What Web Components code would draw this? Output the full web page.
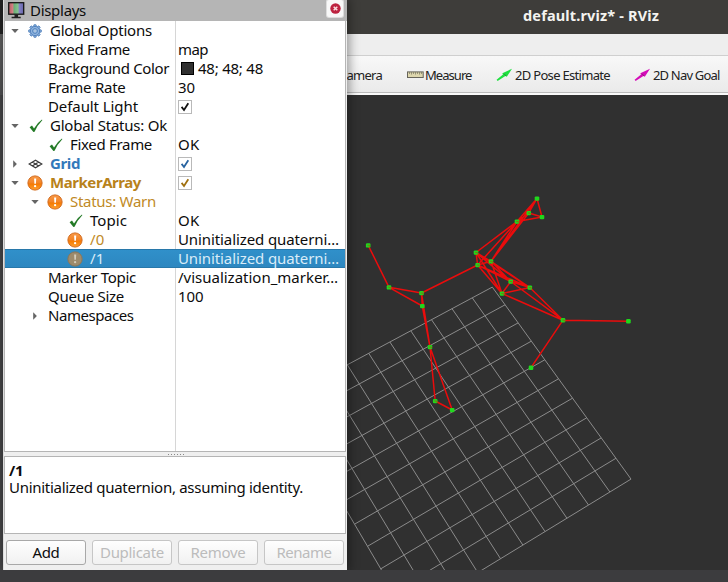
<!DOCTYPE html>
<html lang="en"><head><meta charset="utf-8"><title>default.rviz* - RViz</title>
<style>html,body{margin:0;width:728px;height:582px;overflow:hidden;background:#3c3c3e}</style></head>
<body><rviz-app></rviz-app>
<script>
const define=(name,html,setup)=>customElements.define(name,class extends HTMLElement{
  constructor(){super();this.attachShadow({mode:'open'});}
  connectedCallback(){const t=document.createElement('template');t.innerHTML=typeof html==='function'?html(this):html;
    this.shadowRoot.replaceChildren(t.content.cloneNode(true));if(setup)setup(this,this.shadowRoot);}
});

// Text label whose tracking is adjusted so that it spans `w` pixels.
define('fit-text',el=>`<style>:host{display:inline-block;white-space:pre;flex:none}</style><span>${el.getAttribute('text')}</span>`,(el,r)=>{
  const s=r.querySelector('span'),w=+el.getAttribute('w');
  if(w){const n=s.textContent.length,d=(w-s.getBoundingClientRect().width)/n;s.style.letterSpacing=d+'px';}
});

const icons={
  gear:`<svg width="14" height="14" viewBox="-7 -7 14 14"><g fill="#8fb4df" stroke="#3f73b3" stroke-width=".8">${[0,45,90,135].map(a=>`<rect x="-1.2" y="-6.3" width="2.4" height="12.6" rx=".5" transform="rotate(${a})"/>`).join('')}</g><circle r="4.6" fill="#8fb4df" stroke="#3f73b3" stroke-width=".7"/><circle r="2.4" fill="#a8c6e8" stroke="#3f73b3" stroke-width=".8"/><circle r="1" fill="#fff" stroke="#5b89bf" stroke-width=".5"/></svg>`,
  ok:`<svg width="14" height="14" viewBox="0 0 14 14"><path d="M.6 8.3 3 6.6 5 9.6Q8 4 13 .6L13.3 1.2Q8.4 6 5.6 12.8L4.4 13Z" fill="#237a26"/></svg>`,
  warn:`<svg width="16" height="16" viewBox="0 0 16 16"><defs><linearGradient id="g" x1="0" y1="0" x2="0" y2="1"><stop stop-color="#f99a48"/><stop offset=".52" stop-color="#f28325"/><stop offset=".55" stop-color="#f57900"/><stop offset="1" stop-color="#ffa030"/></linearGradient></defs><circle cx="8" cy="8" r="7.1" fill="url(#g)" stroke="#d26a1c"/><path d="M7.1 3.6h2.1l-.3 5.2H7.4z" fill="#fff"/><circle cx="8.1" cy="11.2" r="1.15" fill="#fff"/></svg>`,
  dim:`<svg width="16" height="16" viewBox="0 0 16 16"><circle cx="8" cy="8" r="7.1" fill="#9d8b6c" stroke="#8f7654"/><path d="M7.1 3.6h2.1l-.3 5.2H7.4z" fill="#d4ccba"/><circle cx="8.1" cy="11.2" r="1.15" fill="#d4ccba"/></svg>`,
  grid:`<svg width="15" height="10" viewBox="0 0 15 10"><path d="M1.2 5 7.5 1.2 13.8 5 7.5 8.8ZM4.3 3.1 10.7 6.9M10.7 3.1 4.3 6.9" fill="none" stroke="#3c3c3c" stroke-width="1.2"/></svg>`,
  ruler:`<svg width="17" height="8" viewBox="0 0 17 8"><rect x=".5" y=".9" width="15.7" height="5.6" fill="#ddd6ad" stroke="#66645a"/><path d="M2.5 1v2M4.5 1v2.5M6.5 1v2M8.5 1v2.5M10.5 1v2M12.5 1v2.5M14.5 1v2" stroke="#77745f" stroke-width=".7"/></svg>`,
  pose:c=>`<svg width="17" height="14" viewBox="0 0 17 14"><path d="M.6 11.8 7 6.6 6.3 5.2 16 .7 10.8 8.8 9.4 8 1.6 13Z" fill="${c}"/><path d="M8.2 5.8 10 8" stroke="#333" stroke-opacity=".45"/></svg>`,
  display:`<svg width="17" height="17" viewBox="0 0 17 17"><defs><linearGradient id="m"><stop stop-color="#b35b60"/><stop offset=".28" stop-color="#d58186"/><stop offset=".35" stop-color="#68ad76"/><stop offset=".62" stop-color="#87c390"/><stop offset=".7" stop-color="#8583c5"/><stop offset="1" stop-color="#6865ab"/></linearGradient></defs><rect x=".7" y=".7" width="15" height="11.5" fill="url(#m)" stroke="#161616" stroke-width="1.3"/><path d="M6.5 12.5h3.6v2.2h2.6v1.6H3.6v-1.6h2.9z" fill="#222"/></svg>`
};
define('rviz-icon',el=>{const n=el.getAttribute('name');return `<style>:host{display:inline-grid;place-items:center;flex:none}svg{display:block}</style>${n==='pose'?icons.pose(el.getAttribute('color')):icons[n]}`});

define('check-box',el=>`<style>:host{display:grid;place-items:center;box-sizing:border-box;width:14px;height:14px;border:1px solid #b9b9b9;background:#fff}svg{display:block}</style><svg width="10" height="10" viewBox="0 0 10 10"><path d="M1.6 4.9 4 8 8.3 1.2" fill="none" stroke="${el.getAttribute('color')}" stroke-width="1.8"/></svg>`);

// One row of the property tree: arrow, icon, name | value.
define('tree-row',el=>{const a=n=>el.getAttribute(n);
  const x=+a('x')+1,ix=a('icon')?x-22:x,arrow=a('arrow'),ax=+a('ax')||6;
  return `<style>:host{display:grid;grid-template-columns:171px 1fr;height:19px;line-height:19px;color:${a('sel')?'#d9ecf8':'#0c0c0c'};background:${a('sel')?'linear-gradient(#3090ca,#2d87c0)':'none'};${a('sel')?'box-shadow:inset 0 1px #2878aa,inset 0 -1px #2878aa;':''}}
  .n{display:grid;grid-template-columns:${ix-1}px ${x-ix}px 1fr;align-items:center;color:${a('sel')?'':a('color')||''};font-weight:${a('bold')?700:400}}
  .v{display:flex;align-items:center;padding-left:2px}svg{display:block}.a{padding-left:${ax}px}
  .sw{box-sizing:border-box;width:13px;height:13px;background:#303030;border:1px solid #000;margin:0 4px 0 3px}rviz-icon{justify-self:start;margin-left:${/warn|dim/.test(a('icon'))?-1:a('icon')==='ok'?1:0}px}</style>
  <div class="n"><span class="a">${arrow?`<svg width="8" height="8" viewBox="0 0 8 8"><path d="${arrow==='d'?'M.3 2.1H7.7L4 6.1Z':'M2.2.3V7.7L5.9 4Z'}" fill="#656565"/></svg>`:''}</span>
  <span style="display:grid">${a('icon')?`<rviz-icon name="${a('icon')}"></rviz-icon>`:''}</span><fit-text text="${a('name')}" w="${a('w')}"></fit-text></div>
  <div class="v">${a('swatch')?'<span class="sw"></span>':''}${a('check')?`<check-box color="${a('check')}"></check-box>`:''}${a('value')?`<fit-text text="${a('value')}" w="${a('vw')}"></fit-text>`:''}</div>`});

const rows=[
 {name:'Global Options',w:102,x:45,icon:'gear',arrow:'d'},
 {name:'Fixed Frame',w:82,x:43,value:'map',vw:30},
 {name:'Background Color',w:121,x:43,swatch:1,value:'48; 48; 48',vw:65},
 {name:'Frame Rate',w:77.5,x:43,value:'30',vw:17},
 {name:'Default Light',w:90,x:43,check:'#111'},
 {name:'Global Status: Ok',w:117,x:45,icon:'ok',arrow:'d'},
 {name:'Fixed Frame',w:82,x:65,icon:'ok',value:'OK',vw:21.5},
 {name:'Grid',w:30,x:45,icon:'grid',arrow:'r',bold:1,color:'#3279ba',check:'#2763a0'},
 {name:'MarkerArray',w:91,x:45,icon:'warn',arrow:'d',bold:1,color:'#b8821a',check:'#a0700f'},
 {name:'Status: Warn',w:86,x:65,icon:'warn',arrow:'d',ax:26,color:'#bf8a26'},
 {name:'Topic',w:37,x:85,icon:'ok',value:'OK',vw:21.5},
 {name:'/0',w:14.5,x:85,icon:'warn',color:'#bf8a26',value:'Uninitialized quaterni…',vw:161},
 {name:'/1',w:14.5,x:85,icon:'dim',sel:1,value:'Uninitialized quaterni…',vw:161},
 {name:'Marker Topic',w:88,x:43,value:'/visualization_marker…',vw:160},
 {name:'Queue Size',w:76,x:43,value:'100',vw:25.5},
 {name:'Namespaces',w:85.5,x:43,arrow:'r',ax:26}];
define('property-tree',`<style>:host{display:block;box-sizing:border-box;flex:none;height:431px;background:linear-gradient(90deg,transparent 170px,#d6d6d6 170px 171px,transparent 171px) #fff;border:solid #b5b5b5;border-width:0 1px 1px 1px}</style>${rows.map(r=>`<tree-row ${Object.entries(r).map(([k,v])=>`${k}="${v}"`).join(' ')}></tree-row>`).join('')}`);

define('push-button',el=>`<style>:host{display:grid;place-items:center;box-sizing:border-box;width:80px;height:25px;border:1px solid ${el.hasAttribute('off')?'#c6c6c6':'#a8a8a8'};border-radius:3px;background:linear-gradient(#fefefe,#f1f1f1);color:${el.hasAttribute('off')?'#bcbcbc':'#0c0c0c'};line-height:19px}</style><fit-text text="${el.getAttribute('text')}" w="${el.getAttribute('w')}"></fit-text>`);

define('displays-panel',`<style>:host{display:flex;flex-direction:column;box-sizing:border-box;width:344px;height:570px;background:#efefef;font:15px/19px "Noto Sans","Open Sans",sans-serif;color:#0c0c0c;box-shadow:0 0 10px 2px #0006;border-left:1px solid #ddd;position:relative;clip-path:inset(0 -14px 0 -3px)}
header{display:flex;align-items:center;flex:none;height:21px;background:#b5b5b5;padding:0 2px 0 4px}header fit-text{margin-left:5px;flex:1}
.x{width:16px;height:17px;display:grid;place-items:center;background:#f8f8f8;border-radius:2px;box-shadow:0 0 0 1px #ddd;margin:-4px 2px 0 0}.x svg{display:block}
property-tree{margin:0 1px 0 0}.h{flex:none;height:4px;display:flex;justify-content:center;align-items:center;gap:2px}.h i{width:1px;height:1px;background:#888}
.d{box-sizing:border-box;flex:none;height:78px;background:#fff;border:1px solid #b5b5b5;padding:5px 4px;line-height:17px;display:flex;flex-direction:column;margin-right:1px}
.b{display:flex;flex:none;gap:6px;padding:6px 2px 5px}</style>
<header><rviz-icon name="display"></rviz-icon><fit-text text="Displays" w="56"></fit-text><span class="x"><svg width="11" height="11" viewBox="0 0 11 11"><circle cx="5.5" cy="5.5" r="5.2" fill="#bd2340"/><path d="M3.7 3.7 7.3 7.3M7.3 3.7 3.7 7.3" stroke="#fbdce0" stroke-width="1.5"/></svg></span></header>
<property-tree></property-tree><div class="h">${'<i></i>'.repeat(6)}</div>
<div class="d"><b><fit-text text="/1" w="14.5"></fit-text></b><fit-text text="Uninitialized quaternion, assuming identity." w="294"></fit-text></div>
<div class="b"><push-button text="Add" w="27"></push-button><push-button off text="Duplicate" w="64"></push-button><push-button off text="Remove" w="55"></push-button><push-button off text="Rename" w="55"></push-button></div>`);

define('tool-bar',`<style>:host{display:grid;grid-template-columns:35px 100px 138px 1fr;align-items:center;height:38px;box-sizing:border-box;background:linear-gradient(#f8f8f8,#eaeaea);border-top:1px solid #cfcfcf;border-bottom:1px solid #bbb;color:#222;font:13px/16px "Noto Sans",sans-serif;overflow:hidden;padding-top:2px}
div{display:flex;align-items:center;white-space:pre}.c{justify-content:flex-end}.m{padding-left:25px;gap:1px}.p{padding-left:14px;gap:2px}.p2{padding-left:14px;gap:2px}</style>
<div class="c"><fit-text text="Camera" w="43"></fit-text></div>
<div class="m"><rviz-icon name="ruler"></rviz-icon><fit-text text="Measure" w="46.5"></fit-text></div>
<div class="p"><rviz-icon name="pose" color="#1fe040"></rviz-icon><fit-text text="2D Pose Estimate" w="95"></fit-text></div>
<div class="p2"><rviz-icon name="pose" color="#d40cb8"></rviz-icon><fit-text text="2D Nav Goal" w="66.5"></fit-text></div>`);

define('scene-view',`<style>:host{display:block;flex:1;background:#303030;overflow:hidden}svg{display:block}</style><svg width="381" height="475" viewBox="347 95 381 475"><g id="grid" stroke="#8b8b8b" stroke-width="1" fill="none"></g><g id="bones" stroke="#ea0c0c" stroke-width="1.5" fill="none"></g><g id="joints" fill="#20d81c"></g></svg>`,(el,r)=>{
  // Ground plane: 10x10 cells under a perspective mapping, least-squares fit to known vertices.
  const K=[];
  [[492.5,287],[472,297.5],[452,308.3],[431.5,319.3],[411.5,331],[390,342.5],[368.5,353.5],[347,364.5]].forEach((p,i)=>K.push([i,0,...p]));
  [[505,305.3],[518,323],[531.3,341.3],[544.5,360],[558.5,379],[572.3,398],[587,418.3],[601.3,437.7],[615.8,458],[631.3,479]].forEach((p,i)=>K.push([0,i+1,...p]));
  [[610,492],[588.3,505],[567,518],[545,531.7],[523,545],[500,558.7]].forEach((p,i)=>K.push([i+1,10,...p]));
  [[355,524.3],[367.5,546],[380.5,569]].forEach((p,i)=>K.push([10,i+6,...p]));
  const A=[];
  for(const[u,v,x,y]of K){A.push([u,v,1,0,0,0,-u*x,-v*x,x],[0,0,0,u,v,1,-u*y,-v*y,y]);}
  const M=Array.from({length:8},(_,i)=>Array.from({length:9},(_,j)=>A.reduce((s,a)=>s+a[i]*a[j],0)));
  for(let i=0;i<8;i++){let p=i;for(let k=i;k<8;k++)if(Math.abs(M[k][i])>Math.abs(M[p][i]))p=k;[M[i],M[p]]=[M[p],M[i]];
    for(let k=0;k<8;k++)if(k!==i){const f=M[k][i]/M[i][i];for(let j=i;j<9;j++)M[k][j]-=f*M[i][j];}}
  const h=M.map((m,i)=>m[8]/m[i]),P=(u,v)=>{const d=h[6]*u+h[7]*v+1;return((h[0]*u+h[1]*v+h[2])/d).toFixed(1)+' '+((h[3]*u+h[4]*v+h[5])/d).toFixed(1)};
  let g='';for(let i=0;i<=10;i++)g+=`M${P(i,0)}L${P(i,10)}M${P(0,i)}L${P(10,i)}`;
  r.querySelector('#grid').innerHTML=`<path d="${g}"/>`;
  const J={a:[368.2,245.3],b:[389,287.3],c:[421.5,293],d:[422.3,306],e:[430,347],f:[435.2,401],g:[452.2,410],h:[477.6,265],i:[476,252.5],j:[491,261.3],k:[517,221.5],l:[528.8,213],m:[537,198.5],n:[542,217],o:[510.7,281.5],p:[502,293.5],q:[529.8,287.5],r:[563,320.2],s:[628.4,321.2],t:[531,367.7]};
  const B='ab bc bd cd ce de ef eg fg ch hi hj ij ik hk jk jl jm km kl kn lm ln mn ho hp hq io ip iq jo jp jq op oq pq or pr qr rs rt'.split(' ');
  r.querySelector('#bones').innerHTML=`<path d="${B.map(b=>`M${J[b[0]]}L${J[b[1]]}`).join('')}"/>`;
  r.querySelector('#joints').innerHTML=Object.entries(J).map(([k,[x,y]])=>`<rect x="${x-2.3}" y="${y-2.1}" width="4.6" height="4.4" rx="1.2"/>${'abcefhijklopqr'.includes(k)?`<path d="M${x-.8} ${y}h2.2v1.4" stroke="#8a6a10" stroke-width=".9" fill="none"/>`:''}`).join('');
});

define('rviz-app',`<style>:host{display:grid;grid-template-columns:3px 344px 381px;grid-template-rows:570px 12px;width:728px;height:582px;background:#3c3c3e;overflow:hidden}
.l{background:linear-gradient(#282828 34px,#6a6a6a 34px,#58585a 95px,#4c4c4e 95px)}
main{display:flex;flex-direction:column;height:570px}h1{margin:0;height:34px;background:#3e3d3a;color:#f4f3ef;font:700 14.5px/30px "Noto Sans",sans-serif;padding-left:176px}
.menu{height:21px;background:#eeeeee}.edge{height:2px;background:#fafafa}</style>
<div class="l"></div><displays-panel></displays-panel><main><h1><fit-text text="default.rviz* - RViz" w="136"></fit-text></h1><div class="menu"></div><tool-bar></tool-bar><div class="edge"></div><scene-view></scene-view></main>`);
</script></body></html>
